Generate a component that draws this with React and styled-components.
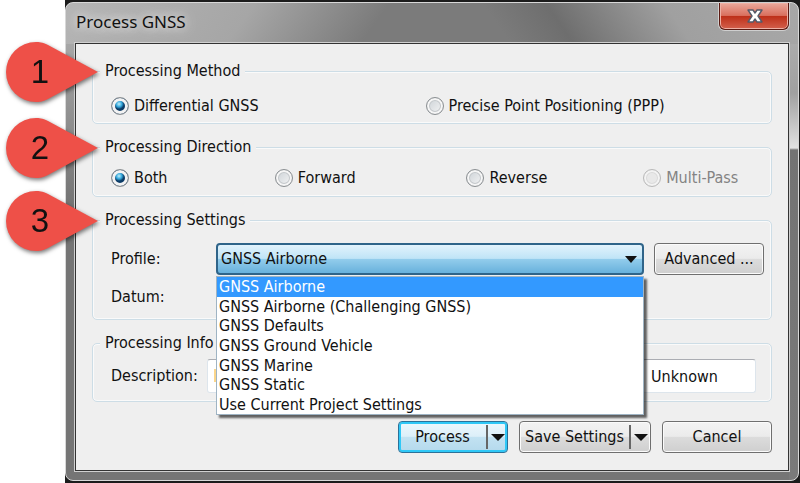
import React, { useState } from 'react';
import styled, { createGlobalStyle } from "styled-components";

const profiles = [
   "GNSS Airborne",
   "GNSS Airborne (Challenging GNSS)",
   "GNSS Defaults",
   "GNSS Ground Vehicle",
   "GNSS Marine",
   "GNSS Static",
   "Use Current Project Settings",
]

const directions = ["Both", "Forward", "Reverse", "Multi-Pass"]

const GlobalStyle = createGlobalStyle`
   * {
      box-sizing: border-box;
   }

   body {
      margin: 0;
      background: white;
      color: #111;
      font-family: Tahoma, "DejaVu Sans Condensed", "Noto Sans", sans-serif;
      font-size: 16px;
      line-height: 20px;
   }

   button, input, select {
      font: inherit;
      color: inherit;
   }
`

const Page = styled.main`
   padding-left: 65px;
   overflow: hidden;
`

const Backdrop = styled.div`
   background: #1c1c1c;
   padding: 2px 1px 2px 0;
`

const Dialog = styled.section`
   border: 1px solid #d8d8d8;
   border-radius: 8px;
   padding: 0 9px 9px;
   background:
      linear-gradient(125deg, #b5b5b5 0%, #a6a6a6 48%, #7b7b7b 82%, #7b7b7b) left top / 50% 41px no-repeat,
      linear-gradient(55deg, #7b7b7b 0%, #7b7b7b 20%, #6e6e6e 36%, #a0a0a0 66%, #a8a8a8) right top / 50% 41px no-repeat,
      linear-gradient(#b4b4b4, #a0a0a0 90px, #e2e2e2 145px, #737373 147px, #7a7a7a) right / 9px 100% no-repeat,
      linear-gradient(#b4b4b4, #757575 200px);
`

const TitleBar = styled.header`
   display: flex;
   justify-content: space-between;
   align-items: flex-start;
   height: 40px;
   padding-left: 1px;
`

const Title = styled.h1`
   margin: 0;
   padding-top: 8px;
   font-family: "Noto Sans", "Open Sans", sans-serif;
   font-size: 17px;
   font-weight: 400;
   line-height: 22px;
   text-shadow: 0 0 8px #eee, 0 0 14px #ddd;
`

const CloseButton = styled.button`
   display: flex;
   justify-content: center;
   align-items: center;
   width: 70px;
   height: 27px;
   padding: 0 0 0 2px;
   border: 1px solid #5b1a12;
   border-top: 0;
   border-radius: 0 0 6px 6px;
   box-shadow: inset 0 0 0 1px #eeb0a4, 0 0 0 1px #cfcfcf;
   background: linear-gradient(#eba99c, #d9705e 48%, #bd2f18 50%, #d3604c);
`

const Client = styled.form`
   display: flex;
   flex-direction: column;
   gap: 13px;
   padding: 17px 16px;
   border: 1px solid #333;
   outline: 1px solid #d0d0d0;
   background: #efefef;
`

const Group = styled.fieldset`
   min-width: 0;
   margin: 0;
   padding: ${props => props.$pad};
   border: 1px solid #cddde6;
   border-radius: 5px;
   box-shadow: inset 0 0 0 1px #fafafa;
`

const Legend = styled.legend`
   position: relative;
   margin-left: -11px;
   padding: 0 5px;
   background: #efefef;
`

const Pin = styled.svg`
   position: absolute;
   right: calc(100% + 2px);
   top: -24px;
   width: 98px;
   height: 70px;
   overflow: visible;
   filter: drop-shadow(1px 2px 2px #0008);
`

const PinText = styled.text`
   font-family: "Liberation Sans", Arial, sans-serif;
   font-size: 33px;
   fill: #111;
`

const RadioRow = styled.div`
   display: grid;
   grid-template-columns: ${props => props.$columns};
`

const RadioLabel = styled.label`
   display: flex;
   align-items: center;
   gap: 5px;
   color: ${props => props.$disabled ? "#838383" : "inherit"};
   white-space: nowrap;
`

const Radio = styled.input`
   appearance: none;
   width: 18px;
   height: 18px;
   margin: 0;
   border: 1px solid #8b8f92;
   border-radius: 50%;
   box-shadow: inset 0 0 0 2px #f6f6f6, inset 0 0 0 3px #c3c7ca;
   background: linear-gradient(135deg, #c9cfd4, #f7f7f7);

   &:checked {
      background: radial-gradient(circle at 7px 6px, #bff0fd 0, #2fa3d8 3px, #0c3b66 5px, #0c3b66 6px);
      box-shadow: inset 0 0 0 3px #f3f3f3;
   }

   &:disabled {
      border-color: #b9b9b9;
      box-shadow: inset 0 0 0 2px #f3f3f3, inset 0 0 0 3px #dadada;
      background: #e8e8e8;
   }
`

const Row = styled.div`
   display: flex;
   align-items: center;
   gap: 10px;
`

const FieldLabel = styled.label`
   width: ${props => props.$width};
   flex: none;
`

const Combo = styled.div`
   position: relative;
   flex: 1;
   height: 32px;
`

const Select = styled.select`
   appearance: none;
   width: 100%;
   height: 32px;
   padding: 0 3px;
   border: 2px solid #2f6489;
   border-radius: 4px;
   background: linear-gradient(#e2f3fc, #bfe4f7 48%, #93cdec 50%, #68b1dc);
   outline: none;
`

const ComboArrow = styled.svg`
   position: absolute;
   top: 13px;
   right: 7px;
   width: 12px;
   height: 7px;
   pointer-events: none;
`

const List = styled.ul`
   position: absolute;
   z-index: 2;
   top: 33px;
   left: 0;
   right: 0;
   display: flex;
   flex-direction: column;
   height: 139px;
   margin: 0;
   padding: 0;
   border: 1px solid #9fb4c4;
   background: white;
   box-shadow: 3px 3px 2px #0009;
   list-style: none;
`

const Option = styled.li`
   display: flex;
   flex: 1;
   align-items: center;
   min-height: 0;
   padding-left: 2px;
   background: ${props => props.$active ? "#3399ff" : "white"};
   color: ${props => props.$active ? "white" : "inherit"};
   line-height: 19px;
   cursor: default;
`

const DatumRow = styled(Row)`
   height: 44px;
`

const TextBox = styled.input`
   width: ${props => props.$width};
   min-width: 0;
   flex: ${props => props.$width ? "none" : 1};
   height: 34px;
   padding: 0 8px;
   border: 1px solid #dde5ec;
   border-top-color: #abadb3;
   border-radius: 3px;
   background: white;
`

const DescriptionBox = styled(TextBox)`
   background: linear-gradient(#fbd68c, #fbd68c) 6px 9px / 2px 13px no-repeat white;
`

const Footer = styled.footer`
   display: flex;
   justify-content: flex-end;
   gap: 11px;
   padding-top: 6px;
`

const Button = styled.button`
   display: flex;
   justify-content: center;
   align-items: center;
   flex: none;
   width: ${props => props.$width};
   height: 32px;
   padding: 0;
   border: 1px solid ${props => props.$primary ? "#2c7299" : "#6f6f6f"};
   border-radius: 4px;
   box-shadow: inset 0 0 0 ${props => props.$primary ? "2px #2fc8f7" : "1px #fbfbfb"};
   background: ${props => props.$primary
      ? "linear-gradient(#eef8fd, #dceff9 48%, #c2e2f2 50%, #b4d9ec)"
      : "linear-gradient(#f3f3f3, #ebebeb 48%, #dcdcdc 50%, #cfcfcf)"};
   white-space: nowrap;
`

const SplitText = styled.span`
   flex: 1;
   text-align: center;
`

const SplitMenu = styled.span`
   display: flex;
   justify-content: center;
   align-items: center;
   width: 21px;
   height: 24px;
   border-left: 2px solid #666;
`

const Arrow = ({ size }) => (
   <svg width={size} height={size / 2} viewBox="0 0 14 7">
      <path d="M0 0H14L7 7Z" fill="#111" />
   </svg>
)

const StepPin = ({ number }) => (
   <Pin viewBox="0 0 98 70" aria-hidden="true">
      <path d="M98 35L48 8C42 5 39 5 36 5A30 30 0 0 0 36 65C39 65 42 65 48 62Z" fill="#ee5048" />
      <PinText x="40" y="46" textAnchor="middle">{number}</PinText>
   </Pin>
)

const SplitButton = ({ children, ...props }) => (
   <Button type="button" {...props}>
      <SplitText>{children}</SplitText>
      <SplitMenu><Arrow size={14} /></SplitMenu>
   </Button>
)

const App = () => {
   const [method, setMethod] = useState("Differential GNSS")
   const [direction, setDirection] = useState("Both")
   const [profile, setProfile] = useState(profiles[0])

   return (
      <Page>
         <GlobalStyle />
         <Backdrop>
            <Dialog>
               <TitleBar>
                  <Title>Process GNSS</Title>
                  <CloseButton type="button" aria-label="Close">
                     <svg width="18" height="16" viewBox="0 0 18 16">
                        <path d="M2 2H7L9 5L11 2H16L12 8L16 14H11L9 11L7 14H2L6 8Z" fill="white" stroke="#565a68" strokeWidth="1.4" strokeLinejoin="round" />
                     </svg>
                  </CloseButton>
               </TitleBar>
               <Client>
                  <Group $pad="15px 0 7px 18px">
                     <Legend><StepPin number={1} />Processing Method</Legend>
                     <RadioRow $columns="315fr 346fr">
                        {["Differential GNSS", "Precise Point Positioning (PPP)"].map(name => (
                           <RadioLabel key={name}>
                              <Radio type="radio" name="method" checked={method === name} onChange={() => setMethod(name)} />
                              {name}
                           </RadioLabel>
                        ))}
                     </RadioRow>
                  </Group>
                  <Group $pad="11px 0 8px 18px">
                     <Legend><StepPin number={2} />Processing Direction</Legend>
                     <RadioRow $columns="164fr 192fr 177fr 128fr">
                        {directions.map(name => (
                           <RadioLabel key={name} $disabled={name === "Multi-Pass"}>
                              <Radio
                                 type="radio"
                                 name="direction"
                                 disabled={name === "Multi-Pass"}
                                 checked={direction === name}
                                 onChange={() => setDirection(name)}
                              />
                              {name}
                           </RadioLabel>
                        ))}
                     </RadioRow>
                  </Group>
                  <Group $pad="13px 7px 0 18px">
                     <Legend><StepPin number={3} />Processing Settings</Legend>
                     <Row>
                        <FieldLabel htmlFor="profile" $width="95px">Profile:</FieldLabel>
                        <Combo>
                           <Select id="profile" value={profile} onChange={e => setProfile(e.target.value)}>
                              {profiles.map(name => <option key={name}>{name}</option>)}
                           </Select>
                           <ComboArrow viewBox="0 0 12 7"><path d="M0 0H12L6 7Z" fill="#111" /></ComboArrow>
                           <List role="listbox" aria-label="Profile">
                              {profiles.map(name => (
                                 <Option
                                    key={name}
                                    role="option"
                                    aria-selected={name === profile}
                                    $active={name === profile}
                                    onClick={() => setProfile(name)}
                                 >
                                    {name}
                                 </Option>
                              ))}
                           </List>
                        </Combo>
                        <Button type="button" $width="110px">Advanced ...</Button>
                     </Row>
                     <DatumRow>Datum:</DatumRow>
                  </Group>
                  <Group $pad="6px 15px 8px 18px">
                     <Legend>Processing Info</Legend>
                     <Row>
                        <FieldLabel htmlFor="description" $width="86px">Description:</FieldLabel>
                        <DescriptionBox id="description" />
                        <TextBox $width="114px" defaultValue="Unknown" aria-label="User" />
                     </Row>
                  </Group>
                  <Footer>
                     <SplitButton $width="110px" $primary>Process</SplitButton>
                     <SplitButton $width="132px">Save Settings</SplitButton>
                     <Button type="button" $width="110px">Cancel</Button>
                  </Footer>
               </Client>
            </Dialog>
         </Backdrop>
      </Page>
   )
}

export default App;
